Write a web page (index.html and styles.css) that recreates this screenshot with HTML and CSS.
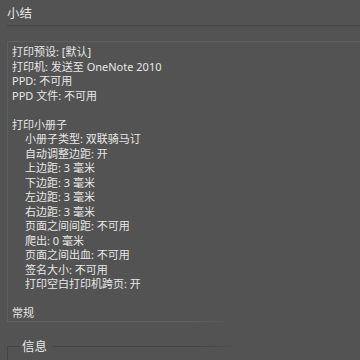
FILE: index.html
```html
<html>
<head>
  <meta charset="utf-8">
  <title>小结</title>
  <link rel="stylesheet" href="styles.css">
</head>
<body>
  <div class="title">小结</div>

  <div class="summary">
    <div class="line">打印预设: [默认]</div>
    <div class="line">打印机: 发送至 OneNote 2010</div>
    <div class="line">PPD: 不可用</div>
    <div class="line">PPD 文件: 不可用</div>
    <div class="line"></div>
    <div class="line">打印小册子</div>
    <div class="line sub">小册子类型: 双联骑马订</div>
    <div class="line sub">自动调整边距: 开</div>
    <div class="line sub">上边距: 3 毫米</div>
    <div class="line sub">下边距: 3 毫米</div>
    <div class="line sub">左边距: 3 毫米</div>
    <div class="line sub">右边距: 3 毫米</div>
    <div class="line sub">页面之间间距: 不可用</div>
    <div class="line sub">爬出: 0 毫米</div>
    <div class="line sub">页面之间出血: 不可用</div>
    <div class="line sub">签名大小: 不可用</div>
    <div class="line sub">打印空白打印机跨页: 开</div>
    <div class="line"></div>
    <div class="line">常规</div>
  </div>
  <div class="summary-bottom"></div>

  <div class="group">
    <div class="group-head">
      <span class="rule-start"></span>
      <span class="legend">信息</span>
      <span class="rule-end"></span>
    </div>
    <div class="group-body"></div>
  </div>
</body>
</html>
```

FILE: styles.css
```css
body {
  margin: 0;
  background: #535353;
  color: #e6e6e6;
  font-family: "Noto Sans", "Noto Sans CJK SC", sans-serif;
  font-size: 11px;
  overflow: hidden;
}

.title {
  margin-left: 7px;
  height: 26px;
  box-sizing: border-box;
  padding-top: 5px;
  font-size: 12.5px;
  line-height: 18px;
  border-bottom: 1px solid #464646;
}

.summary {
  margin: 15px 0 0 7px;
  padding: 3px 0 0 4px;
  border-top: 1px solid #5f5f5f;
  border-left: 1px solid #5f5f5f;
}

.line {
  height: 14.5px;
  line-height: 14.5px;
  white-space: nowrap;
}

.sub {
  padding-left: 13px;
}

.summary-bottom {
  margin-left: 7px;
  width: 227px;
  height: 1px;
  background: linear-gradient(to right, #616161 80%, rgba(97, 97, 97, 0));
}

.group {
  margin: 17px 0 0 7px;
}

.group-head {
  display: flex;
  align-items: center;
  height: 16px;
}

.rule-start {
  width: 13px;
  height: 1px;
  background: #454545;
}

.legend {
  padding: 0 5px 0 2px;
  font-size: 12.5px;
  line-height: 16px;
}

.rule-end {
  width: 188px;
  height: 1px;
  background: linear-gradient(to right, #454545 80%, rgba(69, 69, 69, 0));
}

.group-body {
  height: 40px;
  margin-top: -8px;
  border-left: 1px solid #454545;
}
```
